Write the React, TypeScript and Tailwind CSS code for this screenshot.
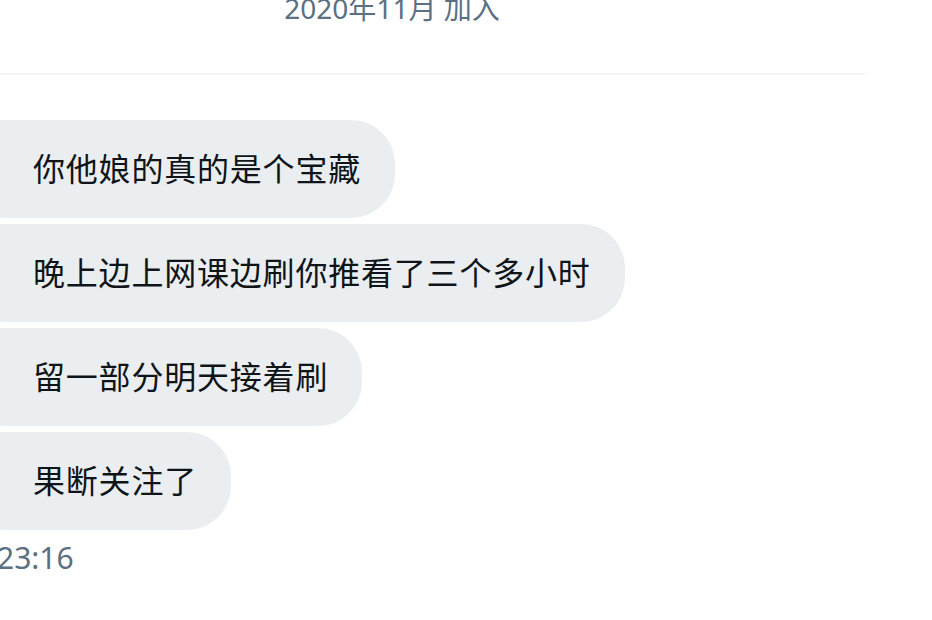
import React from "react";

const messages = [
  "你他娘的真的是个宝藏",
  "晚上边上网课边刷你推看了三个多小时",
  "留一部分明天接着刷",
  "果断关注了",
];

function Bubble({ text }: { text: string }) {
  return (
    <div className="flex">
      <div className="-ml-[40px] flex h-[98px] items-center rounded-[44px] bg-[#ebeef0] pl-[73px] pr-[34px] text-[32px] tracking-[0.8px] text-[#0f1419]">
        {text}
      </div>
    </div>
  );
}

export default function App() {
  return (
    <div
      className="flex h-[620px] w-[932px] flex-col overflow-hidden bg-white"
      style={{ fontFamily: '"Noto Sans", "Noto Sans CJK SC", sans-serif' }}
    >
      {/* joined date header */}
      <div className="flex h-[75px] w-[865px] flex-col border-b-2 border-[#f3f4f5]">
        <div className="-mt-[12px] flex w-[784px] justify-center text-[28px] leading-[40px] text-[#5b7083]">
          2020年11月 加入
        </div>
      </div>

      {/* messages */}
      <div className="mt-[45px] flex flex-col gap-[6px]">
        {messages.map((m, i) => (
          <Bubble key={i} text={m} />
        ))}
      </div>

      <div className="-ml-[3px] mt-[10px] text-[30px] leading-[36px] text-[#5b7083]">
        23:16
      </div>
    </div>
  );
}
